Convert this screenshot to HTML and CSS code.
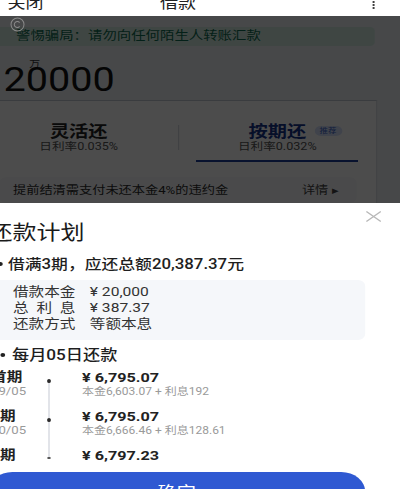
FILE: index.html
```html
<!DOCTYPE html>
<html lang="zh-CN">
<head>
<meta charset="utf-8">
<title>借款</title>
<link rel="stylesheet" href="styles.css">
</head>
<body>
<div class="screen">
 <div class="phone">

  <div class="nav">
   <span class="nav-close">关闭</span>
   <span class="nav-title">借款</span>
   <span class="nav-more"><i></i><i></i><i></i></span>
  </div>

  <div class="dimmed">
   <div class="warn">警惕骗局：请勿向任何陌生人转账汇款</div>
   <div class="amount-unit">万</div>
   <div class="amount">20000</div>

   <div class="plan-card">
    <div class="tabs">
     <div class="tab">
      <div class="tab-name">灵活还</div>
      <div class="tab-rate">日利率0.035%</div>
      <div class="tab-bar"></div>
     </div>
     <div class="tabs-divider"></div>
     <div class="tab tab-on">
      <div class="tab-name">按期还</div>
      <div class="tab-rate">日利率0.032%</div>
      <div class="tab-bar"></div>
      <span class="tag">推荐</span>
     </div>
    </div>
    <div class="notice">
     <span>提前结清需支付未还本金4%的违约金</span>
     <span class="notice-more">详情 ▸</span>
    </div>
   </div>

   <div class="mask"></div>
   <svg class="float-icon" viewBox="0 0 15 15" preserveAspectRatio="none">
    <circle cx="7.5" cy="7.5" r="6.5" fill="none" stroke="#8a8a8a" stroke-width="1"/>
    <path d="M9.6 5.6 A3 3 0 1 0 9.6 9.4" fill="none" stroke="#8a8a8a" stroke-width="1"/>
   </svg>
  </div>

  <div class="sheet">
   <div class="sheet-head">
    <div class="sheet-title">还款计划</div>
    <svg class="sheet-close" viewBox="0 0 14 11" preserveAspectRatio="none">
     <path d="M1 0.5 L13 10.5 M13 0.5 L1 10.5" stroke="#b8b8b8" stroke-width="1.1" fill="none"/>
    </svg>
   </div>

   <div class="bullet bullet-total"><i></i>借满3期，应还总额20,387.37元</div>

   <div class="summary">
    <div class="summary-row"><span class="summary-key">借款本金</span><span>¥ 20,000</span></div>
    <div class="summary-row"><span class="summary-key">总利息</span><span>¥ 387.37</span></div>
    <div class="summary-row"><span class="summary-key">还款方式</span><span>等额本息</span></div>
   </div>

   <div class="bullet bullet-day"><i></i>每月05日还款</div>

   <div class="steps">
    <div class="step">
     <div class="step-when"><div class="step-name">首期</div><div class="step-date">09/05</div></div>
     <div class="step-axis"><span class="seg seg-none"></span><span class="dot"></span><span class="seg seg-fill"></span></div>
     <div class="step-money"><div class="step-sum">¥ 6,795.07</div><div class="step-part">本金6,603.07 + 利息192</div></div>
    </div>
    <div class="step">
     <div class="step-when"><div class="step-name">2期</div><div class="step-date">10/05</div></div>
     <div class="step-axis"><span class="seg"></span><span class="dot"></span><span class="seg seg-fill"></span></div>
     <div class="step-money"><div class="step-sum">¥ 6,795.07</div><div class="step-part">本金6,666.46 + 利息128.61</div></div>
    </div>
    <div class="step step-last">
     <div class="step-when"><div class="step-name">3期</div></div>
     <div class="step-axis"><span class="seg"></span><span class="dot dot-small"></span></div>
     <div class="step-money"><div class="step-sum">¥ 6,797.23</div></div>
    </div>
   </div>

   <div class="confirm">确定</div>
  </div>

 </div>
</div>
</body>
</html>
```

FILE: styles.css
```css
body { margin: 0; background: #fff; }

.screen { width: 400px; height: 489px; overflow: hidden; background: #fff;
  font-family: Roboto, "Noto Sans CJK SC", sans-serif; color: #222; }
.phone { width: 345px; margin-left: -14px; transform: scaleX(1.2); transform-origin: 0 0; }

/* top bar */
.nav { height: 16px; display: flex; align-items: flex-start; overflow: hidden; background: #fff;
  font-size: 15px; line-height: 20px; color: #222; }
.nav-close { width: 127px; margin-left: 18px; margin-top: -7px; }
.nav-title { margin-top: -7px; }
.nav-more { margin-left: auto; margin-right: 21px; margin-top: 1px; display: flex; flex-direction: column; gap: 1.2px; }
.nav-more i { width: 2.4px; height: 2px; border-radius: 1px; background: #333; }

/* page behind the sheet */
.dimmed { position: relative; height: 187px; overflow: hidden; background: #eef0f4; }
.warn { margin: 11px 21px 0 8px; height: 19px; line-height: 19px; padding-left: 17px; border-radius: 4px;
  background: #d3ece2; color: #0f6d51; font-size: 12px; }
.amount-unit { margin: 13px 0 0 36px; font-size: 9px; line-height: 10px; color: #333; }
.amount { margin: -7px 0 0 14.5px; font-size: 33px; line-height: 36px; color: #111; }

.plan-card { margin: 2px 0 0 -5px; width: 331px; box-sizing: border-box; padding-bottom: 20px; background: #fff;
  border-top: 1px solid #c4c9d2; border-right: 1px solid #dde1e7; }
.tabs { display: grid; grid-template-columns: 1fr 1px 1fr; }
.tab { position: relative; padding-top: 22px; text-align: center; }
.tab-name { font-size: 16px; line-height: 18px; font-weight: 700; color: #222; }
.tab-on .tab-name { color: #17338a; }
.tab-rate { font-size: 10.5px; line-height: 12px; color: #555; }
.tab-bar { width: 135px; height: 2px; margin: 7px auto 0; }
.tab-on .tab-bar { background: #1d3c9c; }
.tabs-divider { height: 25px; margin-top: 24px; background: #d5d9e0; }
.tag { position: absolute; left: 113px; top: 25px; width: 23px; height: 10px; line-height: 10px; border-radius: 5px;
  background: #d6e2fb; color: #3f66c9; font-size: 7px; text-align: center; }

.notice { display: flex; margin: 15px 16px 0; padding: 6px 15px 4px 11.5px; border-radius: 6px; background: #f8f9fb;
  font-size: 11px; line-height: 16px; color: #2a2a2a; }
.notice-more { margin-left: auto; color: #444; }

.mask { position: absolute; inset: 0; background: rgba(0, 0, 0, 0.7); }
.float-icon { position: absolute; left: 20px; top: 1px; width: 12.5px; height: 15px; }

/* repayment plan sheet */
.sheet { height: 286px; overflow: hidden; box-sizing: border-box; padding: 17px 29px 0 2px; background: #fff; }
.sheet-head { display: flex; align-items: flex-start; }
.sheet-title { font-size: 20px; line-height: 26px; color: #1a1a1a; }
.sheet-close { width: 14px; height: 11px; margin: -9px -14px 0 auto; }

.bullet { display: flex; align-items: center; font-weight: 500; color: #1f1f1f; }
.bullet i { width: 4px; height: 4px; border-radius: 50%; background: #222; }
.bullet-total { margin-top: 8px; font-size: 14px; line-height: 20px; }
.bullet-total i { margin: 0 4.3px 0 8px; }
.bullet-day { margin-top: 5px; font-size: 14.3px; line-height: 20px; }
.bullet-day i { margin: 0 6px 0 9.7px; }

.summary { margin-top: 6px; padding: 4px 0 8px 20.5px; border-radius: 6px; background: #f5f7fa;
  font-size: 13px; line-height: 16px; color: #333; }
.summary-row { display: flex; }
.summary-key { width: 52px; margin-right: 12px; text-align: justify; text-align-last: justify; }

.steps { margin: 4px 0 0 2.2px; }
.step { display: grid; grid-template-columns: 43.3px 10px 1fr; height: 39px; }
.step-last { height: 16px; }
.step-name { font-size: 13px; line-height: 16px; font-weight: 700; color: #222; white-space: nowrap; }
.step-date { font-size: 11px; line-height: 14px; color: #9a9a9a; }
.step-axis { display: flex; flex-direction: column; align-items: center; }
.seg { width: 1px; height: 10px; background: #cfd3db; }
.seg-none { background: transparent; }
.seg-fill { flex: 1; height: auto; }
.dot { width: 3.6px; height: 3.6px; border-radius: 50%; background: #2b2b2b; }
.dot-small { width: 3px; height: 2px; border-radius: 1px; background: #555; }
.step-money { padding-left: 22.5px; }
.step-sum { font-size: 13.5px; line-height: 16px; font-weight: 700; color: #222; }
.step-part { font-size: 10px; line-height: 14px; color: #9a9a9a; white-space: nowrap; }

.confirm { margin-top: 9px; height: 42px; line-height: 42px; border-radius: 20px; background: #2f59d2;
  color: #fff; font-size: 16px; text-align: center; }
```
